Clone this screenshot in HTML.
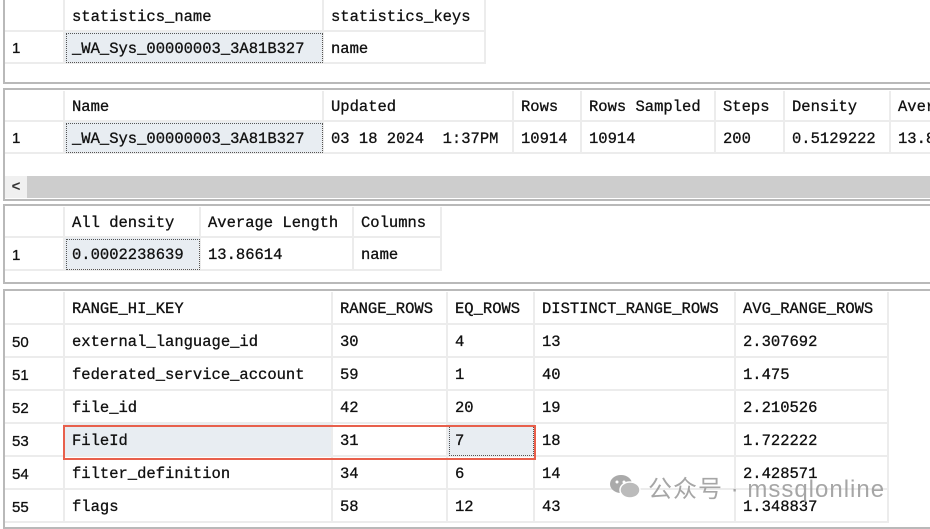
<!DOCTYPE html>
<html><head><meta charset="utf-8"><style>
*{margin:0;padding:0;box-sizing:border-box}
body{width:930px;height:523px;overflow:hidden;background:#fff;position:relative;font-family:"Liberation Mono","Noto Sans CJK SC",monospace;font-size:15.5px;color:#111}
.p{position:absolute;left:3px;right:-2px;border:2px solid #b9b9b9;background:#fff}
.c{position:absolute;border-right:2px solid #ececec;border-bottom:2px solid #ececec;padding-left:7px;padding-top:3px;white-space:nowrap;display:flex;align-items:center;-webkit-text-stroke:0.3px #111}
.sel{background:#e8edf2;outline:1px dotted #555;outline-offset:-2px}
.n{font-family:"Liberation Sans",sans-serif;font-size:15px}
</style></head><body>
<div class="p" style="top:-2px;height:86px"></div>
<div class="p" style="top:88px;height:113px"></div>
<div style="position:absolute;left:5px;right:0;top:176px;height:22px;background:#cdcdcd"></div>
<div style="position:absolute;left:5px;top:176px;width:22px;height:22px;background:#f0f0f0;font:bold 15px 'Liberation Sans';color:#333;text-align:center;line-height:22px">&lt;</div>
<div class="p" style="top:204px;height:80px"></div>
<div class="p" style="top:289px;height:240px"></div>

<!-- pane1 -->
<div class="c" style="left:5px;top:0;width:60px;height:32px"></div>
<div class="c" style="left:65px;top:0;width:259px;height:32px">statistics_name</div>
<div class="c" style="left:324px;top:0;width:162px;height:32px">statistics_keys</div>
<div class="c n" style="left:5px;top:32px;width:60px;height:32px">1</div>
<div class="c sel" style="left:65px;top:32px;width:259px;height:32px">_WA_Sys_00000003_3A81B327</div>
<div class="c" style="left:324px;top:32px;width:162px;height:32px">name</div>

<!-- pane2 -->
<div class="c" style="left:5px;top:91px;width:60px;height:31px"></div>
<div class="c" style="left:65px;top:91px;width:259px;height:31px">Name</div>
<div class="c" style="left:324px;top:91px;width:190px;height:31px">Updated</div>
<div class="c" style="left:514px;top:91px;width:68px;height:31px">Rows</div>
<div class="c" style="left:582px;top:91px;width:134px;height:31px">Rows Sampled</div>
<div class="c" style="left:716px;top:91px;width:69px;height:31px">Steps</div>
<div class="c" style="left:785px;top:91px;width:106px;height:31px">Density</div>
<div class="c" style="left:891px;top:91px;width:60px;height:31px">Average</div>
<div class="c n" style="left:5px;top:122px;width:60px;height:32px">1</div>
<div class="c sel" style="left:65px;top:122px;width:259px;height:32px">_WA_Sys_00000003_3A81B327</div>
<div class="c" style="left:324px;top:122px;width:190px;height:32px">03 18 2024&nbsp;&nbsp;1:37PM</div>
<div class="c" style="left:514px;top:122px;width:68px;height:32px">10914</div>
<div class="c" style="left:582px;top:122px;width:134px;height:32px">10914</div>
<div class="c" style="left:716px;top:122px;width:69px;height:32px">200</div>
<div class="c" style="left:785px;top:122px;width:106px;height:32px">0.5129222</div>
<div class="c" style="left:891px;top:122px;width:60px;height:32px">13.86</div>

<!-- pane3 -->
<div class="c" style="left:5px;top:207px;width:60px;height:31px"></div>
<div class="c" style="left:65px;top:207px;width:136px;height:31px">All density</div>
<div class="c" style="left:201px;top:207px;width:153px;height:31px">Average Length</div>
<div class="c" style="left:354px;top:207px;width:88px;height:31px">Columns</div>
<div class="c n" style="left:5px;top:238px;width:60px;height:33px">1</div>
<div class="c sel" style="left:65px;top:238px;width:136px;height:33px">0.0002238639</div>
<div class="c" style="left:201px;top:238px;width:153px;height:33px">13.86614</div>
<div class="c" style="left:354px;top:238px;width:88px;height:33px">name</div>

<!-- pane4 -->
<div class="c" style="left:5px;top:292px;width:60px;height:33px"></div>
<div class="c" style="left:65px;top:292px;width:268px;height:33px">RANGE_HI_KEY</div>
<div class="c" style="left:333px;top:292px;width:115px;height:33px">RANGE_ROWS</div>
<div class="c" style="left:448px;top:292px;width:87px;height:33px">EQ_ROWS</div>
<div class="c" style="left:535px;top:292px;width:201px;height:33px">DISTINCT_RANGE_ROWS</div>
<div class="c" style="left:736px;top:292px;width:153px;height:33px">AVG_RANGE_ROWS</div>

<div class="c n" style="left:5px;top:325px;width:60px;height:33px">50</div>
<div class="c" style="left:65px;top:325px;width:268px;height:33px">external_language_id</div>
<div class="c" style="left:333px;top:325px;width:115px;height:33px">30</div>
<div class="c" style="left:448px;top:325px;width:87px;height:33px">4</div>
<div class="c" style="left:535px;top:325px;width:201px;height:33px">13</div>
<div class="c" style="left:736px;top:325px;width:153px;height:33px">2.307692</div>

<div class="c n" style="left:5px;top:358px;width:60px;height:33px">51</div>
<div class="c" style="left:65px;top:358px;width:268px;height:33px">federated_service_account</div>
<div class="c" style="left:333px;top:358px;width:115px;height:33px">59</div>
<div class="c" style="left:448px;top:358px;width:87px;height:33px">1</div>
<div class="c" style="left:535px;top:358px;width:201px;height:33px">40</div>
<div class="c" style="left:736px;top:358px;width:153px;height:33px">1.475</div>

<div class="c n" style="left:5px;top:391px;width:60px;height:33px">52</div>
<div class="c" style="left:65px;top:391px;width:268px;height:33px">file_id</div>
<div class="c" style="left:333px;top:391px;width:115px;height:33px">42</div>
<div class="c" style="left:448px;top:391px;width:87px;height:33px">20</div>
<div class="c" style="left:535px;top:391px;width:201px;height:33px">19</div>
<div class="c" style="left:736px;top:391px;width:153px;height:33px">2.210526</div>

<div class="c n" style="left:5px;top:424px;width:60px;height:33px">53</div>
<div class="c" style="left:65px;top:424px;width:268px;height:33px;background:#e8edf2">FileId</div>
<div class="c" style="left:333px;top:424px;width:115px;height:33px">31</div>
<div class="c sel" style="left:448px;top:424px;width:87px;height:33px">7</div>
<div class="c" style="left:535px;top:424px;width:201px;height:33px">18</div>
<div class="c" style="left:736px;top:424px;width:153px;height:33px">1.722222</div>

<div class="c n" style="left:5px;top:457px;width:60px;height:33px">54</div>
<div class="c" style="left:65px;top:457px;width:268px;height:33px">filter_definition</div>
<div class="c" style="left:333px;top:457px;width:115px;height:33px">34</div>
<div class="c" style="left:448px;top:457px;width:87px;height:33px">6</div>
<div class="c" style="left:535px;top:457px;width:201px;height:33px">14</div>
<div class="c" style="left:736px;top:457px;width:153px;height:33px">2.428571</div>

<div class="c n" style="left:5px;top:490px;width:60px;height:33px">55</div>
<div class="c" style="left:65px;top:490px;width:268px;height:33px">flags</div>
<div class="c" style="left:333px;top:490px;width:115px;height:33px">58</div>
<div class="c" style="left:448px;top:490px;width:87px;height:33px">12</div>
<div class="c" style="left:535px;top:490px;width:201px;height:33px">43</div>
<div class="c" style="left:736px;top:490px;width:153px;height:33px">1.348837</div>

<div style="position:absolute;left:63px;top:425px;width:473px;height:35px;border:2px solid #e8604c"></div>

<div style="position:absolute;left:608px;top:469px;display:flex;align-items:center;color:rgba(150,150,150,0.85);font-family:'Liberation Sans','Noto Sans CJK SC',sans-serif;font-size:24px">
<svg width="34" height="28" viewBox="0 0 34 28"><ellipse cx="13" cy="11" rx="11" ry="9" fill="#aaa"/><ellipse cx="22" cy="17" rx="10" ry="8" fill="#bbb" stroke="#fff" stroke-width="1.5"/><circle cx="9" cy="9" r="1.5" fill="#fff"/><circle cx="16" cy="9" r="1.5" fill="#fff"/></svg>
<span style="margin-left:6px;letter-spacing:1px">公众号 · mssqlonline</span></div>
</body></html>
